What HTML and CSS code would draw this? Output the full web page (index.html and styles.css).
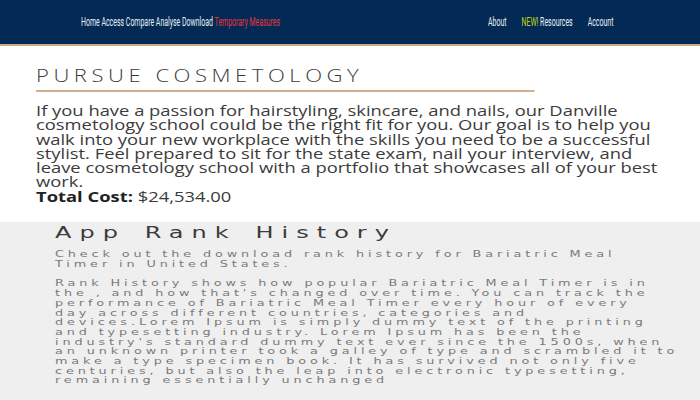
FILE: index.html
```html
<!DOCTYPE html>
<html lang="en">
<head>
<meta charset="utf-8">
<title>Pursue Cosmetology</title>
<link rel="stylesheet" href="styles.css">
</head>
<body>
<header class="topbar">
  <nav class="nav nav-main"><a href="#">Home</a> <a href="#">Access</a> <a href="#">Compare</a> <a href="#">Analyse</a> <a href="#">Download</a> <a href="#" class="hot">Temporary Measures</a></nav>
  <nav class="nav nav-side">
    <a href="#">About</a>
    <a href="#"><span class="new">NEW!</span> Resources</a>
    <a href="#">Account</a>
  </nav>
</header>
<section class="intro">
  <div class="intro-inner">
    <h1 class="intro-title">PURSUE COSMETOLOGY</h1>
    <p class="intro-text">If you have a passion for hairstyling, skincare, and nails, our Danville cosmetology school could be the right fit for you. Our goal is to help you walk into your new workplace with the skills you need to be a successful stylist. Feel prepared to sit for the state exam, nail your interview, and leave cosmetology school with a portfolio that showcases all of your best work.<br><strong>Total Cost:</strong> $24,534.00</p>
  </div>
</section>
<section class="rank">
  <div class="rank-inner">
    <h2 class="rank-title">App Rank History</h2>
    <p class="rank-lead">Check out the download rank history for Bariatric Meal<br>Timer in United States.</p>
    <p class="rank-text">Rank History shows how popular Bariatric Meal Timer is in<br>the , and how that's changed over time. You can track the<br>performance of Bariatric Meal Timer every hour of every<br>day across different countries, categories and<br>devices.Lorem Ipsum is simply dummy text of the printing<br>and typesetting industry. Lorem Ipsum has been the<br>industry's standard dummy text ever since the 1500s, when<br>an unknown printer took a galley of type and scrambled it to<br>make a type specimen book. It has survived not only five<br>centuries, but also the leap into electronic typesetting,<br>remaining essentially unchanged</p>
  </div>
</section>
</body>
</html>
```

FILE: styles.css
```css
html, body {
  margin: 0;
  padding: 0;
  background: #ffffff;
}
body {
  width: 700px;
  height: 400px;
  overflow: hidden;
  font-family: "Open Sans", "DejaVu Sans", sans-serif;
}
.topbar {
  height: 46px;
  background: #022a54;
  border-bottom: 2px solid #c9a987;
  display: flex;
  align-items: center;
  justify-content: space-between;
  padding: 0 87px 0 81px;
  box-sizing: border-box;
}
.nav {
  white-space: nowrap;
  font-family: Roboto, "Liberation Sans", sans-serif;
  font-size: 13px;
  line-height: 16px;
  transform: scaleX(0.535);
}
.nav a {
  color: #e9eef4;
  text-decoration: none;
}
.nav-main {
  display: block;
  flex: 0 1 auto;
  min-width: 0;
  transform-origin: left center;
}
.nav-side {
  display: flex;
  flex: 0 0 auto;
  gap: 28px;
  transform-origin: right center;
}
.nav .hot {
  color: #e8343f;
}
.nav .new {
  color: #c9d41a;
}
.intro {
  padding: 18px 0 0 36px;
  height: 158px;
}
.intro-inner {
  width: 522px;
  transform: scaleX(1.225);
  transform-origin: left top;
}
.intro-title {
  margin: 0;
  width: 407px;
  font-size: 18px;
  font-weight: 300;
  letter-spacing: 3.7px;
  line-height: 22px;
  color: #3a3a3a;
  padding-bottom: 4px;
  border-bottom: 2px solid #d1b08f;
}
.intro-text {
  margin: 11px 0 0;
  font-size: 15px;
  line-height: 14.3px;
  color: #3b3b3b;
}
.intro-text strong {
  font-weight: 700;
  color: #222222;
}
.rank {
  background: #efefef;
  height: 178px;
  padding: 2px 0 0 55px;
  box-sizing: border-box;
}
.rank-inner {
  width: 400px;
  transform: scaleX(1.6);
  transform-origin: left top;
  font-family: "DejaVu Sans", sans-serif;
  white-space: nowrap;
}
.rank-title {
  margin: 0;
  font-size: 15px;
  font-weight: 400;
  line-height: 19px;
  letter-spacing: 5px;
  word-spacing: 2px;
  color: #3c3c3c;
}
.rank-lead, .rank-text {
  font-size: 8px;
  font-weight: 400;
  line-height: 9.7px;
  letter-spacing: 2.43px;
  color: #7a7a7a;
  margin: 0;
}
.rank-lead {
  margin-top: 7px;
}
.rank-text {
  margin-top: 10px;
}
```
